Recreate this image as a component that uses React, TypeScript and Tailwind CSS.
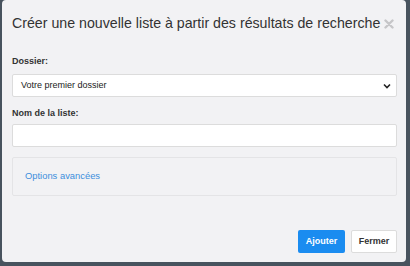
import React from 'react';

const App: React.FC = () => {
  return (
    <div className="w-[410px] h-[266px] bg-[#48535e] pl-[2px] pr-[4px] pb-[4px] font-['Liberation_Sans',Arial,sans-serif]">
      <div className="h-full bg-[#f2f2f4] rounded-[4px] flex flex-col pl-[10px] pr-[9px]">
        {/* Header */}
        <div className="flex items-center justify-between h-[44px] pt-[2px]">
          <h1 className="text-[14.2px] text-[#333] leading-none">
            Créer une nouvelle liste à partir des résultats de recherche
          </h1>
          <svg width="10" height="10" viewBox="0 0 10 10" className="mr-[3px] mt-[1px]">
            <path d="M1.5 1.5 L8.5 8.5 M8.5 1.5 L1.5 8.5" stroke="#c6c6c8" strokeWidth="2.4" strokeLinecap="round" />
          </svg>
        </div>

        {/* Body */}
        <div className="flex flex-col pt-[13px]">
          <label className="text-[9px] font-bold text-[#333] leading-none mb-[8px]">Dossier:</label>
          <div className="h-[23px] bg-white border border-[#dcdcdc] rounded-[2px] flex items-center justify-between pl-[8px] pr-[5px]">
            <span className="text-[9px] text-[#222]">Votre premier dossier</span>
            <svg width="8" height="6" viewBox="0 0 8 6">
              <path d="M1 1.5 L4 4.5 L7 1.5" fill="none" stroke="#222" strokeWidth="1.6" />
            </svg>
          </div>

          <label className="text-[9px] font-bold text-[#333] leading-none mt-[12px] mb-[6px]">Nom de la liste:</label>
          <div className="h-[23px] bg-white border border-[#dcdcdc] rounded-[2px]" />

          <div className="mt-[10px] h-[39px] border border-[#e4e4e6] rounded-[2px] flex items-center pl-[12px]">
            <a className="text-[9.4px] text-[#3d8fdd]">Options avancées</a>
          </div>
        </div>

        {/* Footer */}
        <div className="mt-auto flex justify-end gap-[6px] pb-[9px]">
          <button className="h-[23px] w-[47px] bg-[#1a8cf0] text-white text-[9px] font-bold rounded-[2px]">Ajouter</button>
          <button className="h-[23px] w-[46px] bg-white border border-[#dcdcdc] text-[#333] text-[9px] font-bold rounded-[2px]">Fermer</button>
        </div>
      </div>
    </div>
  );
};

export default App;
